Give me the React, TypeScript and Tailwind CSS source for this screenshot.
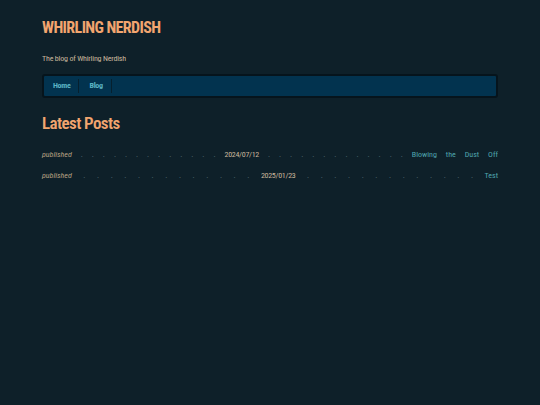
const dots = Array.from({ length: 13 }, () => ".").join(" ");

function Row({ date, title }: { date: string; title: string }) {
  return (
    <div className="text-justify [text-align-last:justify] text-[8px] leading-[21px] whitespace-nowrap">
      <span className="italic text-[#b9a283]">published</span>{" "}
      <span className="text-[#5a747d]">{dots}</span>{" "}
      <span className="text-[#c9b79c] tracking-[-0.3px]">{date}</span>{" "}
      <span className="text-[#5a747d]">{dots}</span>{" "}
      <a className="text-[#4fa5ae]">{title}</a>
    </div>
  );
}

export default function App() {
  return (
    <div className="min-h-screen bg-[#0e2029] font-['Roboto',sans-serif] [font-stretch:75%] px-[42px] pt-[17px]">
      <h1 className="text-[16px] leading-[22px] font-bold tracking-[-0.6px] text-[#f2a56f]">WHIRLING NERDISH</h1>
      <p className="mt-[15px] text-[8px] leading-[10px] tracking-[-0.2px] text-[#c9b79c]">The blog of Whirling Nerdish</p>
      <nav className="mt-[10px] h-[24px] rounded-[3px] border-2 border-[#06141c] bg-[#02334f] flex items-center">
        <a className="pl-[9px] pr-[8px] text-[8px] font-bold tracking-[-0.3px] text-[#5ab4c4] border-r border-[#06202e] leading-[14px]">Home</a>
        <a className="pl-[10px] pr-[8px] text-[8px] font-bold tracking-[-0.3px] text-[#5ab4c4] border-r border-[#06202e] leading-[14px]">Blog</a>
      </nav>
      <h2 className="mt-[13px] text-[17px] leading-[24px] font-semibold tracking-[-0.6px] text-[#f2a56f]">Latest Posts</h2>
      <div className="mt-[9px]">
        <Row date="2024/07/12" title="Blowing the Dust Off" />
        <Row date="2025/01/23" title="Test" />
      </div>
    </div>
  );
}
